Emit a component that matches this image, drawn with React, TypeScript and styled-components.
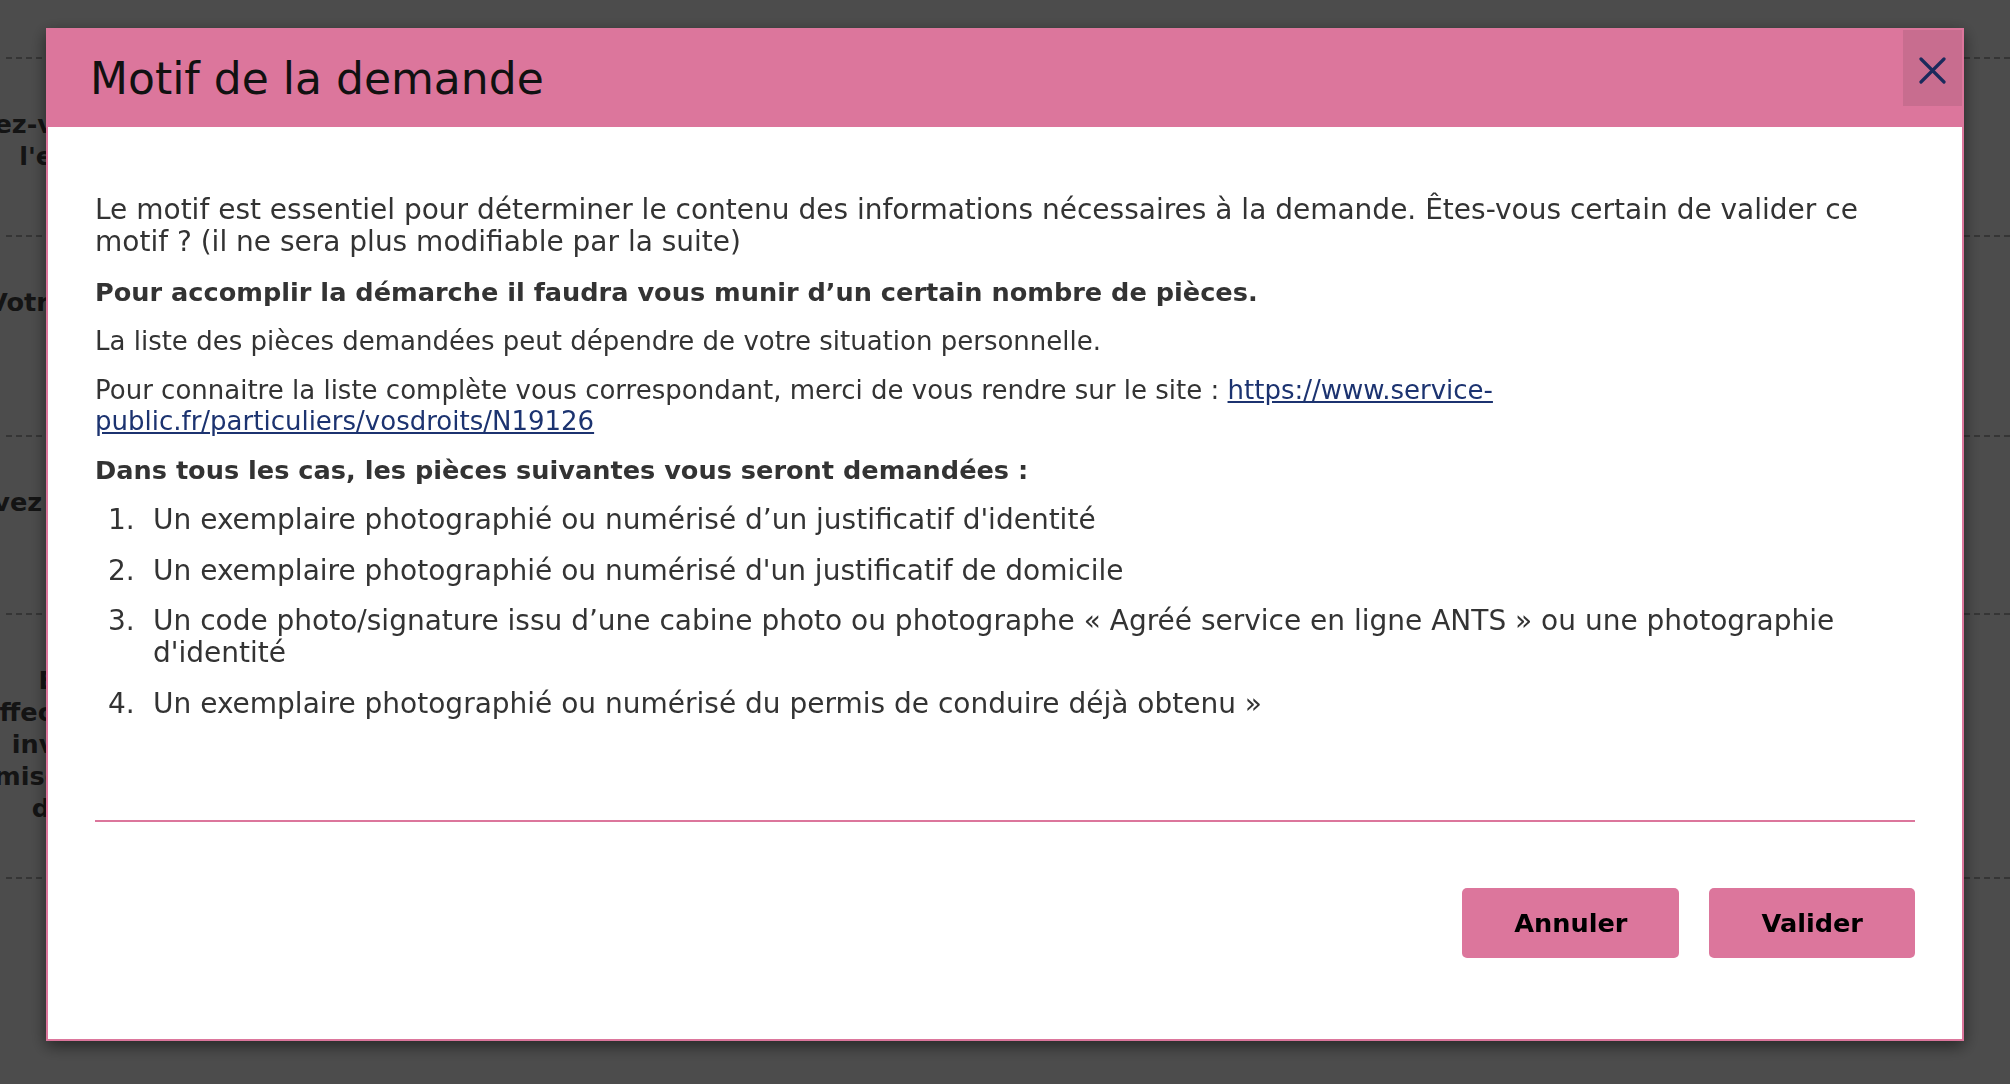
import React from "react";
import styled, { createGlobalStyle } from "styled-components";

const pink = "#dc769c";

const GlobalStyle = createGlobalStyle`
  * {
    box-sizing: border-box;
  }
  html,
  body {
    margin: 0;
    padding: 0;
  }
  body {
    width: 2010px;
    height: 1084px;
    overflow: hidden;
    background: #ffffff;
    font-family: "DejaVu Sans", Verdana, sans-serif;
  }
`;

/* page behind the dialog */
const Page = styled.div`
  padding: 57px 0 0 6px;
`;

const FormRow = styled.div<{ $height: number }>`
  display: flex;
  height: ${(p) => p.$height}px;
  border-top: 2px dashed #b3b3b3;
`;

const RowLabel = styled.div`
  width: 266px;
  padding-top: 49px;
  display: flex;
  flex-direction: column;
  align-items: flex-end;
  font-size: 25.6px;
  line-height: 32px;
  font-weight: bold;
  white-space: nowrap;
  color: #444;
`;

/* dialog */
const Backdrop = styled.div`
  position: fixed;
  inset: 0;
  background: rgba(0, 0, 0, 0.7);
  display: flex;
  justify-content: center;
  align-items: flex-start;
  padding-top: 28px;
`;

const Modal = styled.div`
  width: 1918px;
  background: #ffffff;
  border: 2px solid ${pink};
  box-shadow: 0 5px 15px rgba(0, 0, 0, 0.5);
`;

const Header = styled.div`
  height: 97px;
  background: ${pink};
  display: flex;
  align-items: center;
  justify-content: space-between;
  padding-left: 42px;
`;

const Title = styled.h2`
  margin: 0;
  font-size: 44px;
  line-height: 1;
  font-weight: normal;
  color: #111;
`;

const CloseButton = styled.button`
  align-self: flex-start;
  width: 59px;
  height: 76px;
  padding: 4px 0 0;
  border: none;
  background: #c86d8f;
  display: flex;
  align-items: center;
  justify-content: center;
  cursor: pointer;
`;

const Body = styled.div`
  padding: 67px 47px 0;
  color: #333;
`;

const Text = styled.p<{ $variant?: "lead" | "bold" }>`
  margin: 0 0 18.5px;
  font-size: ${(p) =>
    p.$variant === "lead" ? "28px" : p.$variant === "bold" ? "25.6px" : "26px"};
  line-height: ${(p) => (p.$variant === "lead" ? "32px" : "30.72px")};
  font-weight: ${(p) => (p.$variant === "bold" ? "bold" : "normal")};
`;

const Link = styled.a`
  color: #1c3370;
  text-decoration: underline;
`;

const List = styled.ol`
  margin: 0;
  padding: 0 0 0 13px;
  list-style: none;
  font-size: 28px;
  line-height: 32px;
`;

const Item = styled.li`
  display: flex;
  margin-bottom: 18.5px;

  &:last-child {
    margin-bottom: 0;
  }
`;

const Num = styled.span`
  width: 45px;
  flex-shrink: 0;
`;

const Footer = styled.div`
  margin-top: 100px;
  border-top: 2px solid ${pink};
  padding: 66px 0 81px;
  display: flex;
  justify-content: flex-end;
  gap: 30px;
`;

const Button = styled.button`
  height: 70px;
  padding: 0 52px;
  border: none;
  border-radius: 5px;
  background: ${pink};
  color: #000;
  font-family: "DejaVu Sans", Verdana, sans-serif;
  font-size: 25.6px;
  font-weight: bold;
  cursor: pointer;
`;

const rows = [
  { height: 178, lines: ["Avez-vous déjà réussi", "l'examen du code"] },
  { height: 200, lines: ["Votre permis actuel"] },
  { height: 178, lines: ["Avez vous un permis"] },
  {
    height: 264,
    lines: [
      "En cas de vol ou",
      "affectations du titre",
      "invalidation ou de",
      "mise à jour du titre",
      "de conduire volé",
    ],
  },
  { height: 240, lines: [] as string[] },
];

const pieces = [
  "Un exemplaire photographié ou numérisé d’un justificatif d'identité",
  "Un exemplaire photographié ou numérisé d'un justificatif de domicile",
  "Un code photo/signature issu d’une cabine photo ou photographe « Agréé service en ligne ANTS » ou une photographie d'identité",
  "Un exemplaire photographié ou numérisé du permis de conduire déjà obtenu »",
];

const CloseIcon = () => (
  <svg width="27" height="27" viewBox="0 0 27 27">
    <path
      d="M2 2 L25 25 M25 2 L2 25"
      stroke="#1b2a5c"
      strokeWidth="3.2"
      strokeLinecap="round"
      fill="none"
    />
  </svg>
);

const App: React.FC = () => {
  return (
    <>
      <GlobalStyle />
      <Page>
        {rows.map((row, key) => (
          <FormRow key={key} $height={row.height}>
            <RowLabel>
              {row.lines.map((line) => (
                <span key={line}>{line}</span>
              ))}
            </RowLabel>
          </FormRow>
        ))}
      </Page>

      <Backdrop>
        <Modal role="dialog">
          <Header>
            <Title>Motif de la demande</Title>
            <CloseButton aria-label="Fermer">
              <CloseIcon />
            </CloseButton>
          </Header>
          <Body>
            <Text $variant="lead">
              Le motif est essentiel pour déterminer le contenu des informations
              nécessaires à la demande. Êtes-vous certain de valider ce motif ?
              (il ne sera plus modifiable par la suite)
            </Text>
            <Text $variant="bold">
              Pour accomplir la démarche il faudra vous munir d’un certain
              nombre de pièces.
            </Text>
            <Text>
              La liste des pièces demandées peut dépendre de votre situation
              personnelle.
            </Text>
            <Text>
              Pour connaitre la liste complète vous correspondant, merci de vous
              rendre sur le site :{" "}
              <Link href="#">
                https://www.service-public.fr/particuliers/vosdroits/N19126
              </Link>
            </Text>
            <Text $variant="bold">
              Dans tous les cas, les pièces suivantes vous seront demandées :
            </Text>
            <List>
              {pieces.map((piece, i) => (
                <Item key={i}>
                  <Num>{i + 1}.</Num>
                  <span>{piece}</span>
                </Item>
              ))}
            </List>
            <Footer>
              <Button>Annuler</Button>
              <Button>Valider</Button>
            </Footer>
          </Body>
        </Modal>
      </Backdrop>
    </>
  );
};

export default App;
